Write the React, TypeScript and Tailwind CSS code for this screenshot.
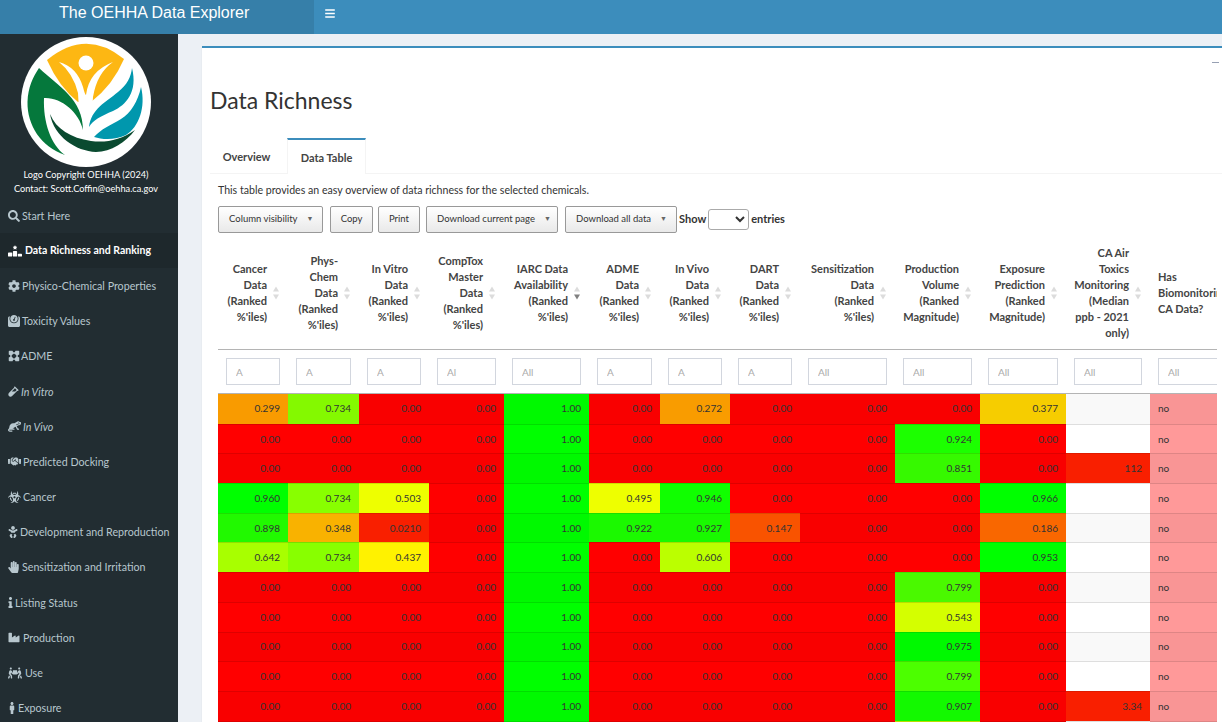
import { FaBars, FaSearch, FaCog, FaWeight, FaVial, FaOtter, FaHandshake, FaBiohazard, FaBaby, FaHandPaper, FaInfo, FaIndustry, FaPeopleCarry, FaMale } from "react-icons/fa";
import { FaRankingStar } from "react-icons/fa6";

function AdmeIcon({ className }: any) {
  return (
    <svg viewBox="0 0 16 16" className={className} fill="currentColor">
      <path d="M2 1h4l1 2h2l1-2h4a1 1 0 0 1 1 1v4l-2 1v2l2 1v4a1 1 0 0 1-1 1h-4l-1-2H7l-1 2H2a1 1 0 0 1-1-1v-4l2-1V7L1 6V2a1 1 0 0 1 1-1zm6 3.500L6 6 4.500 8 6 10l2 1.500L10 10l1.500-2L10 6z" fillRule="evenodd" />
    </svg>
  );
}

function Logo() {
  return (
    <svg viewBox="0 0 130 130" className="w-[130px] h-[130px]">
      <circle cx="65" cy="65" r="65" fill="#ffffff" />
      <path d="M26 23 Q65 -9 103 22 Q92 48 70 65 L57 65 Q38 50 26 23 Z" fill="#fdb713" />
      <path d="M38 25 Q56 30 62 50 Q64 58 65 58 Q68 34 92 25 Q76 36 72 60 L70 92 L59 92 L57 56 Q52 36 38 25 Z" fill="#ffffff" />
      <circle cx="65" cy="26" r="7.500" fill="#ffffff" />
      <path d="M18 31 C38 50 62 62 62 93 C58 75 40 60 23 61 C22 85 30 108 44 118 C20 110 6 88 6.500 65 C7 50 12 40 18 31 Z" fill="#05783c" />
      <path d="M29 77 C33 100 55 114 75 115 C90 115 105 105 114 93 C100 103 85 106 70 104 C50 101 35 92 29 77 Z" fill="#0a4a30" />
      <path d="M68 90 C70 72 85 65 97 55 C106 48 110 40 111 31 C117 55 105 68 92 74 C80 79 72 83 68 90 Z" fill="#0097ad" />
      <path d="M73 100 C80 92 90 88 100 82 C110 76 117 64 120 50 C125 70 118 90 105 98 C95 103 82 103 73 100 Z" fill="#0097ad" />
    </svg>
  );
}

const menu: any[] = [
  { label: "Start Here", Icon: FaSearch, box: "w-[14px]", icon: "w-[12px] h-[12px]" },
  { label: "Data Richness and Ranking", Icon: FaRankingStar, box: "w-[17px]", icon: "w-[14px] h-[12px]", active: true },
  { label: "Physico-Chemical Properties", Icon: FaCog, box: "w-[14px]", icon: "w-[12px] h-[12px]" },
  { label: "Toxicity Values", Icon: FaWeight, box: "w-[14px]", icon: "w-[12px] h-[12px]" },
  { label: "ADME", Icon: AdmeIcon, box: "w-[13px]", icon: "w-[12px] h-[12px]" },
  { label: "In Vitro", Icon: FaVial, box: "w-[13px]", icon: "w-[11px] h-[11px]", italic: true },
  { label: "In Vivo", Icon: FaOtter, box: "w-[15px]", icon: "w-[13px] h-[11px]", italic: true },
  { label: "Predicted Docking", Icon: FaHandshake, box: "w-[15px]", icon: "w-[13px] h-[11px]" },
  { label: "Cancer", Icon: FaBiohazard, box: "w-[15px]", icon: "w-[13px] h-[12px]" },
  { label: "Development and Reproduction", Icon: FaBaby, box: "w-[12px]", icon: "w-[10px] h-[12px]" },
  { label: "Sensitization and Irritation", Icon: FaHandPaper, box: "w-[14px]", icon: "w-[11px] h-[12px]" },
  { label: "Listing Status", Icon: FaInfo, box: "w-[7px]", icon: "w-[5px] h-[11px]" },
  { label: "Production", Icon: FaIndustry, box: "w-[15px]", icon: "w-[12px] h-[11px]" },
  { label: "Use", Icon: FaPeopleCarry, box: "w-[17px]", icon: "w-[14px] h-[12px]" },
  { label: "Exposure", Icon: FaMale, box: "w-[10px]", icon: "w-[8px] h-[12px]" },
];

const cols = [
  { w: "w-[70px]", lines: ["Cancer", "Data", "(Ranked", "%'iles)"], filter: "A" },
  { w: "w-[71px]", lines: ["Phys-", "Chem", "Data", "(Ranked", "%'iles)"], filter: "A" },
  { w: "w-[70px]", lines: ["In Vitro", "Data", "(Ranked", "%'iles)"], filter: "A" },
  { w: "w-[75px]", lines: ["CompTox", "Master", "Data", "(Ranked", "%'iles)"], filter: "Al" },
  { w: "w-[85px]", lines: ["IARC Data", "Availability", "(Ranked", "%'iles)"], filter: "All", sorted: true },
  { w: "w-[71px]", lines: ["ADME", "Data", "(Ranked", "%'iles)"], filter: "A" },
  { w: "w-[70px]", lines: ["In Vivo", "Data", "(Ranked", "%'iles)"], filter: "A" },
  { w: "w-[70px]", lines: ["DART", "Data", "(Ranked", "%'iles)"], filter: "A" },
  { w: "w-[95px]", lines: ["Sensitization", "Data", "(Ranked", "%'iles)"], filter: "All" },
  { w: "w-[85px]", lines: ["Production", "Volume", "(Ranked", "Magnitude)"], filter: "All" },
  { w: "w-[86px]", lines: ["Exposure", "Prediction", "(Ranked", "Magnitude)"], filter: "All" },
  { w: "w-[84px]", lines: ["CA Air", "Toxics", "Monitoring", "(Median", "ppb - 2021", "only)"], filter: "All" },
  { w: "w-[100px]", lines: ["Has", "Biomonitoring", "CA Data?"], filter: "All", left: true },
];

const colors: Record<string, string> = {
  "0.00": "bg-[#ff0000]",
  "1.00": "bg-[#00ff00]",
  "0.299": "bg-[#ff9f00]",
  "0.734": "bg-[#88ff00]",
  "0.272": "bg-[#ffa000]",
  "0.377": "bg-[#fcd200]",
  "0.924": "bg-[#1cff00]",
  "0.851": "bg-[#38ff00]",
  "112": "bg-[#ff2000]",
  "0.960": "bg-[#00ff00]",
  "0.503": "bg-[#eeff00]",
  "0.495": "bg-[#eeff00]",
  "0.946": "bg-[#10ff00]",
  "0.966": "bg-[#00ff00]",
  "0.898": "bg-[#22ff00]",
  "0.348": "bg-[#ffb700]",
  "0.0210": "bg-[#ff2000]",
  "0.922": "bg-[#1cff00]",
  "0.927": "bg-[#1aff00]",
  "0.147": "bg-[#ff5500]",
  "0.186": "bg-[#ff6a00]",
  "0.642": "bg-[#a8ff00]",
  "0.437": "bg-[#fff200]",
  "0.606": "bg-[#bbff00]",
  "0.953": "bg-[#00ff00]",
  "0.799": "bg-[#4cff00]",
  "0.543": "bg-[#d4ff00]",
  "0.975": "bg-[#00ff00]",
  "0.907": "bg-[#14ff00]",
  "3.34": "bg-[#ff2000]",
  "": "bg-white",
};

const Z = "0.00";
const O = "1.00";
const rows = [
  ["0.299", "0.734", Z, Z, O, Z, "0.272", Z, Z, Z, "0.377", ""],
  [Z, Z, Z, Z, O, Z, Z, Z, Z, "0.924", Z, ""],
  [Z, Z, Z, Z, O, Z, Z, Z, Z, "0.851", Z, "112"],
  ["0.960", "0.734", "0.503", Z, O, "0.495", "0.946", Z, Z, Z, "0.966", ""],
  ["0.898", "0.348", "0.0210", Z, O, "0.922", "0.927", "0.147", Z, Z, "0.186", ""],
  ["0.642", "0.734", "0.437", Z, O, Z, "0.606", Z, Z, Z, "0.953", ""],
  [Z, Z, Z, Z, O, Z, Z, Z, Z, "0.799", Z, ""],
  [Z, Z, Z, Z, O, Z, Z, Z, Z, "0.543", Z, ""],
  [Z, Z, Z, Z, O, Z, Z, Z, Z, "0.975", Z, ""],
  [Z, Z, Z, Z, O, Z, Z, Z, Z, "0.799", Z, ""],
  [Z, Z, Z, Z, O, Z, Z, Z, Z, "0.907", Z, "3.34"],
  [Z, Z, Z, Z, O, Z, Z, Z, Z, "0.543", Z, ""],
];

function Btn({ label, caret, className }: any) {
  return (
    <button className={`h-[27px] shrink-0 flex items-center border border-[#999] rounded-[2px] bg-gradient-to-b from-white to-[#e9e9e9] text-[9.500px] text-[#333] ${caret ? "justify-start pl-[10px] gap-[9px]" : "justify-center"} ${className}`}>
      {label}
      {caret && <span className="text-[7px] text-[#666] -mt-[3px]">▼</span>}
    </button>
  );
}

function SortArrows({ sorted }: any) {
  return (
    <span className="absolute right-[9px] top-1/2 -translate-y-1/2 flex flex-col gap-[3px]">
      <span className="w-0 h-0 border-x-[3px] border-x-transparent border-b-[5px] border-b-[#dcdcdc]" />
      <span className={`w-0 h-0 border-x-[3px] border-x-transparent border-t-[5px] ${sorted ? "border-t-[#808080]" : "border-t-[#dcdcdc]"}`} />
    </span>
  );
}

export default function App() {
  return (
    <div className="h-[722px] w-[1222px] overflow-hidden flex flex-col bg-[#ecf0f5] font-[Lato,sans-serif] text-[#333]">
      <header className="h-[34px] shrink-0 flex bg-[#3c8dbc]">
        <div className="w-[314px] bg-[#367fa9] pl-[59px] pt-[3px] text-[16px] leading-[20px] text-white font-['Liberation_Sans',Arial,sans-serif]">
          The OEHHA Data Explorer
        </div>
        <button className="ml-[11px] h-[26px] flex items-center text-white">
          <FaBars className="w-[10px] h-[11px]" />
        </button>
      </header>
      <div className="flex flex-1 min-h-0">
        <aside className="w-[178px] shrink-0 bg-[#222d32] text-[#b8c7ce] text-[10.700px]">
          <div className="h-[164px] flex flex-col items-center pt-[3px] pr-[6px]">
            <Logo />
            <div className="mt-[1px] text-[9.200px] leading-[14px] text-center text-white whitespace-nowrap">
              Logo Copyright OEHHA (2024)
              <br />
              Contact: Scott.Coffin@oehha.ca.gov
            </div>
          </div>
          <nav className="flex flex-col">
            {menu.map((m) => (
              <a key={m.label} className={`h-[35.200px] shrink-0 flex items-center pl-[8px] whitespace-nowrap ${m.active ? "bg-[#1e282c] text-white font-bold text-[10.500px]" : ""} ${m.italic ? "italic" : ""}`}>
                <span className={`${m.box} shrink-0`}>
                  <m.Icon className={m.icon} />
                </span>
                {m.label}
              </a>
            ))}
          </nav>
        </aside>
        <main className="flex-1 min-w-0 overflow-hidden pl-[24px] pt-[12px]">
          <section className="relative bg-white border-t-2 border-[#3c8dbc] h-[700px] shadow-[0_1px_1px_rgba(0,0,0,0.1)]">
            <span className="absolute right-[3px] top-[14px] w-[7px] h-[1px] bg-[#97a0b3]" />
            <h2 className="pl-[8px] pt-[37px] h-[90px] text-[23px] leading-[30px] text-[#333]">Data Richness</h2>
            <div className="ml-[8px] h-[36px] flex border-b border-[#f4f4f4] text-[11px] font-bold text-[#444]">
              <div className="w-[77px] flex items-center justify-center pt-[4px] pr-[4px]">Overview</div>
              <div className="w-[79px] h-[36px] flex items-center justify-center pt-[2px] bg-white border-t-2 border-x border-t-[#3c8dbc] border-x-[#f4f4f4]">Data Table</div>
            </div>
            <div className="pl-[16px]">
              <p className="pt-[9px] text-[10.600px] leading-[14px]">This table provides an easy overview of data richness for the selected chemicals.</p>
              <div className="mt-[9px] flex items-center h-[27px] text-[11px]">
                <Btn label="Column visibility" caret className="w-[105px]" />
                <Btn label="Copy" className="w-[43px] ml-[7px]" />
                <Btn label="Print" className="w-[42px] ml-[5px]" />
                <Btn label="Download current page" caret className="w-[132px] ml-[6px]" />
                <Btn label="Download all data" caret className="w-[112px] ml-[7px]" />
                <b className="ml-[2px]">Show</b>
                <select className="ml-[2px] w-[41px] h-[21px] border border-[#aaa] rounded-[3px] bg-white" />
                <b className="ml-[2px]">entries</b>
              </div>
              <div className="mt-[4px] w-[999px] overflow-hidden">
                <table className="table-fixed w-[1032px] border-separate border-spacing-0 text-[10px]">
                  <colgroup>
                    {cols.map((c, i) => (
                      <col key={i} className={c.w} />
                    ))}
                  </colgroup>
                  <thead>
                    <tr>
                      {cols.map((c, i) => (
                        <th key={i} className={`relative h-[113px] pb-[1px] border-b border-b-[#b4b4b4] pl-[8px] align-middle font-bold text-[#444] text-[11px] leading-[16px] whitespace-nowrap ${c.left ? "text-left" : "text-right pr-[21px]"}`}>
                          {c.lines.map((l) => (
                            <div key={l}>{l}</div>
                          ))}
                          {!c.left && <SortArrows sorted={c.sorted} />}
                        </th>
                      ))}
                    </tr>
                    <tr>
                      {cols.map((c, i) => (
                        <td key={i} className="h-[44px] px-[8px] border-b border-b-[#b4b4b4]">
                          <input placeholder={c.filter} readOnly className="w-full h-[27px] border border-[#d2d6de] pl-[9px] text-[10px] placeholder:text-[#aaa] outline-none" />
                        </td>
                      ))}
                    </tr>
                  </thead>
                  <tbody>
                    {rows.map((r, ri) => {
                      const stripe = ri % 2 === 0 ? "shadow-[inset_0_0_0_9999px_rgba(0,0,0,0.023)]" : "";
                      return (
                        <tr key={ri}>
                          {r.map((v, ci) => (
                            <td key={ci} className={`h-[29.700px] text-right px-[8px] ${ri > 0 ? "border-t border-t-[rgba(0,0,0,0.13)]" : ""} ${colors[v]} ${stripe}`}>
                              {v}
                            </td>
                          ))}
                          <td className={`h-[29.700px] px-[8px] bg-[#ff9999] ${ri > 0 ? "border-t border-t-[rgba(0,0,0,0.13)]" : ""} ${stripe}`}>no</td>
                        </tr>
                      );
                    })}
                  </tbody>
                </table>
              </div>
            </div>
          </section>
        </main>
      </div>
    </div>
  );
}
